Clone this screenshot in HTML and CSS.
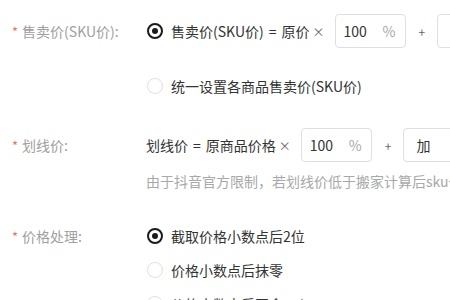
FILE: index.html
```html
<!DOCTYPE html>
<html lang="zh-CN">
<head>
<meta charset="utf-8">
<link rel="stylesheet" href="styles.css">
</head>
<body>
<div class="form">
  <div class="item item-sale">
    <div class="label"><span class="req">*</span>售卖价(SKU价):</div>
    <div class="content">
      <div class="line">
        <span class="radio checked"></span>
        <span class="text">售卖价(SKU价)<span class="eq">=</span>原价<span class="times">×</span></span>
        <div class="box box-pct"><span class="val">100</span><span class="unit">%</span></div>
        <span class="plus">+</span>
        <div class="box box-sel"><span class="val">加</span></div>
      </div>
      <div class="line line-gap">
        <span class="radio"></span>
        <span class="text">统一设置各商品售卖价(SKU价)</span>
      </div>
    </div>
  </div>
  <div class="item item-line">
    <div class="label"><span class="req">*</span>划线价:</div>
    <div class="content">
      <div class="line">
        <span class="text text-plain">划线价<span class="eq">=</span>原商品价格<span class="times">×</span></span>
        <div class="box box-pct"><span class="val">100</span><span class="unit">%</span></div>
        <span class="plus">+</span>
        <div class="box box-sel"><span class="val">加</span></div>
      </div>
      <div class="hint">由于抖音官方限制，若划线价低于搬家计算后sku价格，将自动调整划线价</div>
    </div>
  </div>
  <div class="item item-proc">
    <div class="label"><span class="req">*</span>价格处理:</div>
    <div class="content">
      <div class="line">
        <span class="radio checked"></span>
        <span class="text">截取价格小数点后2位</span>
      </div>
      <div class="line">
        <span class="radio"></span>
        <span class="text">价格小数点后抹零</span>
      </div>
      <div class="line">
        <span class="radio"></span>
        <span class="text">价格小数点后四舍五入</span>
      </div>
    </div>
  </div>
</div>
</body>
</html>
```
FILE: styles.css
```css
html, body {
  margin: 0;
  padding: 0;
  background: #ffffff;
  overflow: hidden;
}
body {
  width: 450px;
  height: 300px;
  font-family: "Noto Sans CJK SC", "Noto Sans", sans-serif;
  font-size: 14px;
  color: #333333;
}
.form {
  padding: 14px 0 0 12px;
  width: 700px;
}
.item {
  display: flex;
  align-items: flex-start;
}
.item-line {
  margin-top: 25px;
}
.item-proc {
  margin-top: 28px;
}
.label {
  width: 134px;
  flex: none;
  height: 34px;
  line-height: 34px;
  color: #a0a0a0;
  white-space: nowrap;
}
.req {
  color: #f07070;
  margin-right: 4px;
  font-size: 13px;
}
.content {
  display: flex;
  flex-direction: column;
}
.line {
  display: flex;
  align-items: center;
  height: 34px;
  white-space: nowrap;
}
.line-gap {
  margin-top: 21px;
}
.radio {
  width: 16px;
  height: 16px;
  box-sizing: border-box;
  border: 1px solid #dcdfe6;
  border-radius: 50%;
  margin-left: 1px;
  margin-right: 8px;
  flex: none;
  display: flex;
  align-items: center;
  justify-content: center;
}
.radio.checked {
  border: 2px solid #1a1a1a;
}
.radio.checked::after {
  content: "";
  width: 6px;
  height: 6px;
  border-radius: 50%;
  background: #1a1a1a;
}
.text {
  color: #333333;
}
.eq {
  margin: 0 5px;
}
.times {
  color: #666666;
  font-size: 12px;
  margin-left: 3px;
}
.box {
  height: 34px;
  box-sizing: border-box;
  border: 1px solid #dcdfe6;
  border-radius: 4px;
  display: flex;
  align-items: center;
  flex: none;
}
.box-pct {
  width: 71px;
  margin-left: 10px;
  padding: 0 0 0 8px;
}
.box-pct .val {
  width: 39px;
  color: #333333;
}
.box-pct .unit {
  color: #a8a8a8;
}
.box-sel {
  width: 100px;
  padding-left: 12px;
}
.plus {
  color: #666666;
  font-size: 12px;
  margin: 0 12px 0 13px;
}
.hint {
  margin-top: 9px;
  height: 20px;
  line-height: 20px;
  color: #a8a8a8;
  white-space: nowrap;
}
```
